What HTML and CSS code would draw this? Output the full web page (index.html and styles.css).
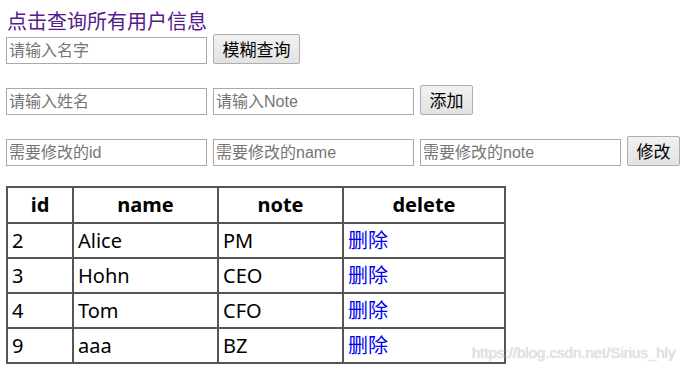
FILE: index.html
```html
<!DOCTYPE html>
<html lang="zh">
<head>
<meta charset="utf-8">
<title>用户信息</title>
<link rel="stylesheet" href="styles.css">
</head>
<body>
<div class="page">
  <a class="title" href="#">点击查询所有用户信息</a>
  <div class="row">
    <input class="field" type="text" placeholder="请输入名字">
    <button class="btn btn-wide" type="button">模糊查询</button>
  </div>
  <div class="row">
    <input class="field" type="text" placeholder="请输入姓名">
    <input class="field" type="text" placeholder="请输入Note">
    <button class="btn" type="button">添加</button>
  </div>
  <div class="row row-last">
    <input class="field" type="text" placeholder="需要修改的id">
    <input class="field" type="text" placeholder="需要修改的name">
    <input class="field" type="text" placeholder="需要修改的note">
    <button class="btn" type="button">修改</button>
  </div>
  <table class="users">
    <thead>
      <tr><th class="c-id">id</th><th class="c-name">name</th><th class="c-note">note</th><th class="c-del">delete</th></tr>
    </thead>
    <tbody>
      <tr><td>2</td><td>Alice</td><td>PM</td><td><a href="#">删除</a></td></tr>
      <tr><td>3</td><td>Hohn</td><td>CEO</td><td><a href="#">删除</a></td></tr>
      <tr><td>4</td><td>Tom</td><td>CFO</td><td><a href="#">删除</a></td></tr>
      <tr><td>9</td><td>aaa</td><td>BZ</td><td><a href="#">删除</a></td></tr>
    </tbody>
  </table>
</div>
<div class="watermark">https://blog.csdn.net/Sirius_hly</div>
</body>
</html>
```

FILE: styles.css
```css
html, body {
  margin: 0;
  padding: 0;
  background: #ffffff;
}

body {
  font-family: "Noto Sans", "Noto Sans CJK SC", sans-serif;
  color: #000;
}

.page {
  padding: 8px 6px 0 6px;
}

.title {
  display: block;
  height: 26px;
  line-height: 26px;
  font-size: 20px;
  color: #551a8b;
  text-decoration: none;
  padding-left: 1px;
  font-family: "Noto Sans CJK SC", sans-serif;
}

.row {
  display: flex;
  align-items: flex-end;
  gap: 6px;
  height: 30px;
  margin-bottom: 21px;
}

.row-last {
  margin-bottom: 20px;
}

.field {
  box-sizing: border-box;
  width: 201px;
  height: 27px;
  margin: 0;
  padding: 0 2px;
  border: 1px solid #a9a9a9;
  font-family: "Liberation Sans", "Noto Sans CJK SC", sans-serif;
  font-size: 16px;
  color: #000;
  background: #fff;
  outline: none;
}

.field::placeholder {
  color: #757575;
  opacity: 1;
}

.btn {
  box-sizing: border-box;
  width: 53px;
  height: 30px;
  margin: 0;
  padding: 0;
  border: 1px solid #adadad;
  border-radius: 2px;
  background: linear-gradient(#f2f2f2, #e2e2e2);
  font-family: "Noto Sans CJK SC", sans-serif;
  font-size: 17px;
  color: #000;
  line-height: 28px;
}

.btn-wide {
  width: 87px;
}

.users {
  border-collapse: collapse;
  border: 2px solid #555;
  font-family: "Noto Sans", "Noto Sans CJK SC", sans-serif;
  font-size: 20px;
}

.users th,
.users td {
  border: 2px solid #555;
  height: 32px;
  padding: 0 4px;
  text-align: left;
  line-height: 32px;
}

.users th {
  height: 34px;
  line-height: 34px;
  text-align: center;
  font-weight: bold;
}

.c-id { width: 56px; }
.c-name { width: 135px; }
.c-note { width: 115px; }
.c-del { width: 152px; }

.users a {
  color: #0000ee;
  text-decoration: none;
  font-family: "Noto Sans CJK SC", sans-serif;
}

.watermark {
  position: absolute;
  left: 472px;
  top: 344px;
  font-family: "Liberation Sans", sans-serif;
  font-size: 15px;
  color: #e6e6e6;
  text-shadow: 0 0 1px #bdbdbd;
}
```
